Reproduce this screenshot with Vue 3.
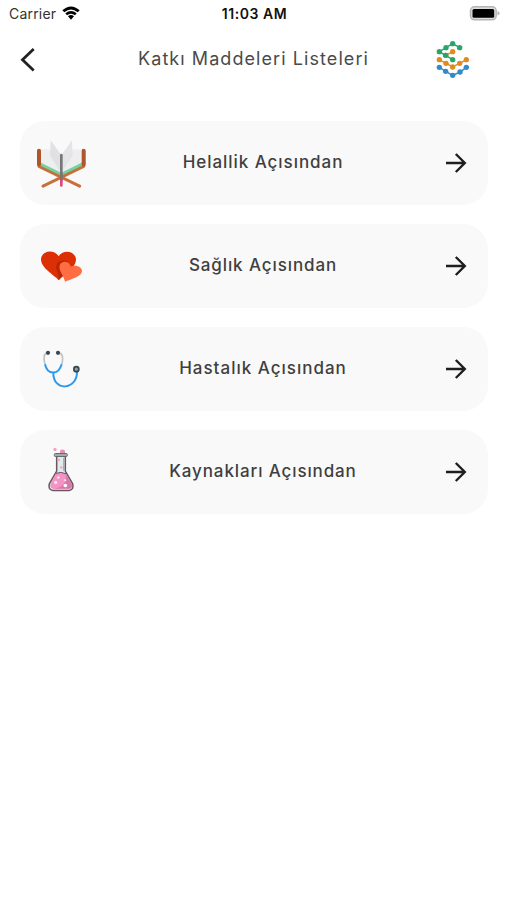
<template>
    <div class="screen">
        <div class="status-bar">
            <div class="status-left">
                <span class="carrier">Carrier</span>
                <svg class="wifi" width="18" height="14" viewBox="0 0 54 42">
                    <path d="M1 13 Q27 -10 53 13 L47 19 Q27 2 7 19 Z" />
                    <path d="M10 22 Q27 8 44 22 L39 28 Q27 18 15 28 Z" />
                    <path d="M18 31 Q27 23 36 31 L27 41 Z" />
                </svg>
            </div>
            <div class="status-time">11:03 AM</div>
            <div class="status-right">
                <svg width="31" height="15" viewBox="0 0 31 15">
                    <rect x="1.5" y="0.8" width="25.7" height="13" rx="4" fill="#ddd" stroke="#b5b5b5" stroke-width="1.5" />
                    <rect x="3.5" y="2.9" width="21.7" height="8.8" rx="1.5" fill="#000" />
                    <path d="M28.5 5 Q30.6 5.6 30.6 7.3 Q30.6 9 28.5 9.6 Z" fill="#b5b5b5" />
                </svg>
            </div>
        </div>

        <div class="header">
            <svg class="back" width="17" height="26" viewBox="0 0 17 26">
                <path d="M13.7 2 L2.5 12.8 L13.7 23.5" fill="none" stroke="#222" stroke-width="2.8" />
            </svg>
            <h1 class="title">Katkı Maddeleri Listeleri</h1>
            <svg class="logo" width="55" height="55" viewBox="0 0 165 165">
                <g v-for="(chain, i) in logoChains" :key="i" :stroke="chain.color" :fill="chain.color">
                    <polyline :points="chain.line" fill="none" stroke-width="4.5" />
                    <circle v-for="(p, j) in chain.dots" :key="j" :cx="p[0]" :cy="p[1]" r="8" stroke="none" />
                </g>
            </svg>
        </div>

        <div class="list">
            <div v-for="item in items" :key="item.icon" class="card">
                <svg v-if="item.icon === 'book'" class="icon" viewBox="0 1.5 225 195">
                    <path d="M48 56 L75 56 L109 126 L109 133 L48 102 Z" fill="#eeeeef" />
                    <path d="M170 56 L144 56 L109 126 L109 133 L170 102 Z" fill="#eeeeef" />
                    <path d="M77 29 L108 73 L108 126 L75 76 Z" fill="#e1e1e3" />
                    <path d="M141 29 L110 73 L110 126 L143 76 Z" fill="#e5e5e7" />
                    <path d="M46 96 L109 127 L171 96 L171 108 L109 141 L46 108 Z" fill="#6dd5a0" />
                    <path d="M42 61 V108 L164 167" class="wood" />
                    <path d="M176 61 V108 L54 167" class="wood" />
                    <path d="M42 61 V102 M176 61 V102" stroke="#ad562c" stroke-width="12" stroke-linecap="round" />
                    <path d="M109 74 V140" stroke="#777779" stroke-width="8" stroke-linecap="round" />
                    <path d="M109 128 V153" stroke="#85706d" stroke-width="8" />
                    <path d="M109 151 V165" stroke="#e6457d" stroke-width="8" stroke-linecap="round" />
                </svg>

                <svg v-else-if="item.icon === 'heart'" class="icon" viewBox="0 -4.5 225 195">
                    <path d="M101 134 C87 119 48 97 48 73 C48 46 85 39 101 62 C117 39 153 48 153 73 C153 97 116 119 101 134 Z" fill="#dc2f05" />
                    <path d="M101 134 L119 115 L130 79 C114 70 96 76 94 90 C91 105 105 120 101 134 Z" fill="#b92706" />
                    <path d="M120 139 C118 123 100 105 104 90 C108 76 131 74 137 93 C153 86 171 94 171 106 C171 123 143 129 120 139 Z" fill="#fe6e42" />
                </svg>

                <svg v-else-if="item.icon === 'stethoscope'" class="icon" viewBox="0 -4.5 225 195" fill="none">
                    <path d="M67 43 C56 45 55 58 60 78" stroke="#bfc3c6" stroke-width="5" />
                    <path d="M101 43 C113 45 116 57 110 78" stroke="#bfc3c6" stroke-width="5" />
                    <path d="M60 77 C64 95 74 102 84 102 C96 102 105 95 110 77" stroke="#2c9bef" stroke-width="6" />
                    <path d="M85 101 C83 161 157 155 156 100" stroke="#2c9bef" stroke-width="6" />
                    <circle cx="69" cy="43" r="6.3" fill="#39484e" />
                    <circle cx="99" cy="43" r="6.3" fill="#39484e" />
                    <circle cx="154" cy="92" r="7.5" fill="#8c9da4" stroke="#35474f" stroke-width="5" />
                </svg>

                <svg v-else class="icon" viewBox="0 4.5 225 195">
                    <circle cx="90" cy="33" r="5" fill="#f3a0c0" />
                    <path d="M105 46 V40 Q105 33 112 33 Q120 33 120 40 V46 Z" fill="#ec8eb0" />
                    <path d="M95 53 H121 V98 L143 136 Q148 153 132 156 H84 Q68 153 73 136 L95 98 Z" fill="#dfebec" stroke="#6b5660" stroke-width="4.5" />
                    <path d="M93 105 Q107 99 122 106 L140 136 Q144 149 132 151 H84 Q73 148 77 135 Z" fill="#f593c5" />
                    <path d="M122 106 L140 136 Q144 149 132 151 H82 Q128 148 122 106 Z" fill="#da78ac" />
                    <path d="M91 105 Q107 98 124 106" stroke="#704e61" stroke-width="3" fill="none" />
                    <rect x="88" y="45" width="39" height="9" rx="3" fill="#a1abad" stroke="#656a6e" stroke-width="3" />
                    <path d="M116 58 V97" stroke="#a5b1b3" stroke-width="4" />
                    <circle cx="101" cy="64" r="4" fill="#f3a5c5" />
                    <circle cx="109" cy="87" r="4" fill="#f3a5c5" />
                    <circle cx="100" cy="117" r="4" fill="#ffe2f1" />
                    <circle cx="92" cy="132" r="5" fill="#ffe2f1" />
                    <circle cx="120" cy="125" r="3.5" fill="#ffd8ec" />
                    <circle cx="121" cy="141" r="5.5" fill="#fff" />
                </svg>

                <div class="label"><span :style="{ letterSpacing: item.spacing + 'px' }">{{ item.label }}</span></div>

                <svg class="arrow" width="22" height="22" viewBox="0 0 22 22">
                    <path d="M1 11 H19.5 M10.8 2 L19.8 11 L10.8 20" fill="none" stroke="#1e1e1e" stroke-width="2.4" />
                </svg>
            </div>
        </div>
    </div>
</template>

<script setup>
const items = [
    { icon: 'book', label: 'Helallik Açısından', spacing: 0.95 },
    { icon: 'heart', label: 'Sağlık Açısından', spacing: 0.9 },
    { icon: 'stethoscope', label: 'Hastalık Açısından', spacing: 1 },
    { icon: 'flask', label: 'Kaynakları Açısından', spacing: 0.88 }
];

function makeChain(color, dots) {
    return { color, dots, line: dots.map(p => p.join(',')).join(' ') };
}

const logoChains = [
    makeChain('#df8b20', [[83, 59], [62, 70]]),
    makeChain('#29a567', [[104, 47], [83, 35], [63, 47], [43, 59], [62, 70], [83, 83]]),
    makeChain('#df8b20', [[43, 83], [63, 94], [83, 105], [104, 94], [124, 83]]),
    makeChain('#318bcb', [[43, 106], [62, 118], [83, 130], [105, 120], [124, 106]])
];
</script>

<style>
body {
    background-color: #fff;
}
</style>

<style scoped>
.screen {
    width: 507px;
    height: 900px;
    overflow: hidden;
    background-color: #fff;
    font-family: Inter, "Liberation Sans", sans-serif;
}

.status-bar {
    display: grid;
    grid-template-columns: 1fr auto 1fr;
    align-items: center;
    height: 27px;
    padding: 0 7px 0 9px;
    color: #111;
}

.status-left {
    display: flex;
    align-items: center;
    gap: 6px;
}

.carrier {
    font-size: 14px;
    letter-spacing: 0.2px;
    color: #333;
}

.wifi {
    position: relative;
    top: -1px;
}

.status-time {
    font-size: 14px;
    font-weight: 600;
    letter-spacing: 0.55px;
}

.status-right {
    display: flex;
    justify-content: flex-end;
}

.header {
    display: flex;
    align-items: center;
    height: 65px;
    padding: 0 27px 0 20px;
}

.back {
    flex: none;
}

.title {
    flex: 1;
    margin: 0;
    padding: 0 0 3px 45px;
    text-align: center;
    font-size: 18px;
    font-weight: 400;
    letter-spacing: 1.07px;
    color: #4a4a4a;
    white-space: nowrap;
}

.logo {
    flex: none;
}

.list {
    display: flex;
    flex-direction: column;
    gap: 19px;
    padding: 29px 19px 0 20px;
}

.card {
    display: flex;
    align-items: center;
    height: 84px;
    padding: 0 21px 0 5px;
    border-radius: 25px;
    background-color: #f9f9f9;
}

.icon {
    flex: none;
    width: 75px;
    height: 65px;
}

.wood {
    fill: none;
    stroke: #c8703c;
    stroke-width: 9;
    stroke-linecap: round;
    stroke-linejoin: round;
}

.label {
    flex: 1;
    padding: 0 19px 3px 0;
    text-align: center;
    font-size: 17px;
    font-weight: 500;
    color: #3f3f3f;
    white-space: nowrap;
}

.arrow {
    flex: none;
}
</style>
